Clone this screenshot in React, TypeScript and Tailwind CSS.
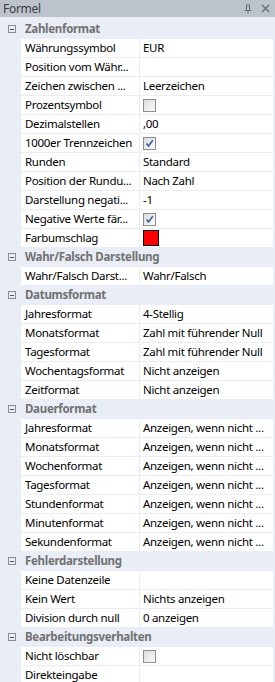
import { Fragment } from 'react';

type Value = string | { check: boolean } | { color: string };
type Section = { title: string; rows: [string, Value][] };

const sections: Section[] = [
  {
    title: 'Zahlenformat',
    rows: [
      ['Währungssymbol', 'EUR'],
      ['Position vom Währ...', ''],
      ['Zeichen zwischen ...', 'Leerzeichen'],
      ['Prozentsymbol', { check: false }],
      ['Dezimalstellen', ',00'],
      ['1000er Trennzeichen', { check: true }],
      ['Runden', 'Standard'],
      ['Position der Rundu...', 'Nach Zahl'],
      ['Darstellung negati...', '-1'],
      ['Negative Werte fär...', { check: true }],
      ['Farbumschlag', { color: '#ff0000' }],
    ],
  },
  {
    title: 'Wahr/Falsch Darstellung',
    rows: [['Wahr/Falsch Darst...', 'Wahr/Falsch']],
  },
  {
    title: 'Datumsformat',
    rows: [
      ['Jahresformat', '4-Stellig'],
      ['Monatsformat', 'Zahl mit führender Null'],
      ['Tagesformat', 'Zahl mit führender Null'],
      ['Wochentagsformat', 'Nicht anzeigen'],
      ['Zeitformat', 'Nicht anzeigen'],
    ],
  },
  {
    title: 'Dauerformat',
    rows: [
      ['Jahresformat', 'Anzeigen, wenn nicht ...'],
      ['Monatsformat', 'Anzeigen, wenn nicht ...'],
      ['Wochenformat', 'Anzeigen, wenn nicht ...'],
      ['Tagesformat', 'Anzeigen, wenn nicht ...'],
      ['Stundenformat', 'Anzeigen, wenn nicht ...'],
      ['Minutenformat', 'Anzeigen, wenn nicht ...'],
      ['Sekundenformat', 'Anzeigen, wenn nicht ...'],
    ],
  },
  {
    title: 'Fehlerdarstellung',
    rows: [
      ['Keine Datenzeile', ''],
      ['Kein Wert', 'Nichts anzeigen'],
      ['Division durch null', '0 anzeigen'],
    ],
  },
  {
    title: 'Bearbeitungsverhalten',
    rows: [
      ['Nicht löschbar', { check: false }],
      ['Direkteingabe', ''],
    ],
  },
];

function Checkbox({ checked }: { checked: boolean }) {
  return (
    <span className="flex h-[13px] w-[13px] items-center justify-center border border-[#8f8f8f] bg-gradient-to-br from-[#dcdcdc] to-[#fbfbfb]">
      {checked && (
        <svg width="9" height="9" viewBox="0 0 9 9">
          <path d="M1.5 4.5 L3.5 7 L7.8 1.2" fill="none" stroke="#3b5fa3" strokeWidth="1.6" />
        </svg>
      )}
    </span>
  );
}

function Cell({ value }: { value: Value }) {
  if (typeof value === 'string') return <span>{value}</span>;
  if ('check' in value) return <Checkbox checked={value.check} />;
  return <span className="h-[16px] w-[16px] border border-black" style={{ background: value.color }} />;
}

export default function App() {
  return (
    <div
      className="w-[275px] h-[682px] overflow-hidden bg-[#e9edf5] text-[11.5px] leading-none tracking-[-0.3px] text-black"
      style={{ fontFamily: '"Noto Sans", "Open Sans", sans-serif' }}
    >
      <div className="flex h-[17px] items-center justify-between bg-[#bcc3cd] pl-[3px] pr-[5px] text-[12px] text-[#3a3d42]">
        <span>Formel</span>
        <div className="flex items-center gap-[9px]">
          <svg width="8" height="10" viewBox="0 0 8 10">
            <path d="M2 1 H6 M2.5 1 V6 M5.5 1 V6 M0.5 6.5 H7.5 M4 6.5 V9.5" stroke="#686d74" strokeWidth="1" fill="none" />
          </svg>
          <svg width="9" height="9" viewBox="0 0 9 9">
            <path d="M1 1 L8 8 M8 1 L1 8" stroke="#686d74" strokeWidth="1.4" />
          </svg>
        </div>
      </div>
      <div className="grid grid-cols-[20px_118px_133px] gap-x-px pt-[3px]">
        {sections.map((s) => (
          <Fragment key={s.title}>
            <div className="col-span-3 mb-px flex h-[18px] items-center bg-[#e9edf5]">
              <span className="ml-[8px] flex h-[8px] w-[8px] items-center justify-center border border-[#8a8e94]">
                <span className="h-px w-[4px] bg-[#555]" />
              </span>
              <span className="ml-[9px] whitespace-nowrap font-bold text-[#727272]">{s.title}</span>
            </div>
            {s.rows.map(([label, value], i) => (
              <Fragment key={s.title + i}>
                <div />
                <div className="mb-px flex h-[18px] items-center overflow-hidden whitespace-nowrap bg-white pl-[4px]">
                  {label}
                </div>
                <div className="mb-px flex h-[18px] items-center overflow-hidden whitespace-nowrap bg-white pl-[3px]">
                  <Cell value={value} />
                </div>
              </Fragment>
            ))}
          </Fragment>
        ))}
      </div>
    </div>
  );
}
